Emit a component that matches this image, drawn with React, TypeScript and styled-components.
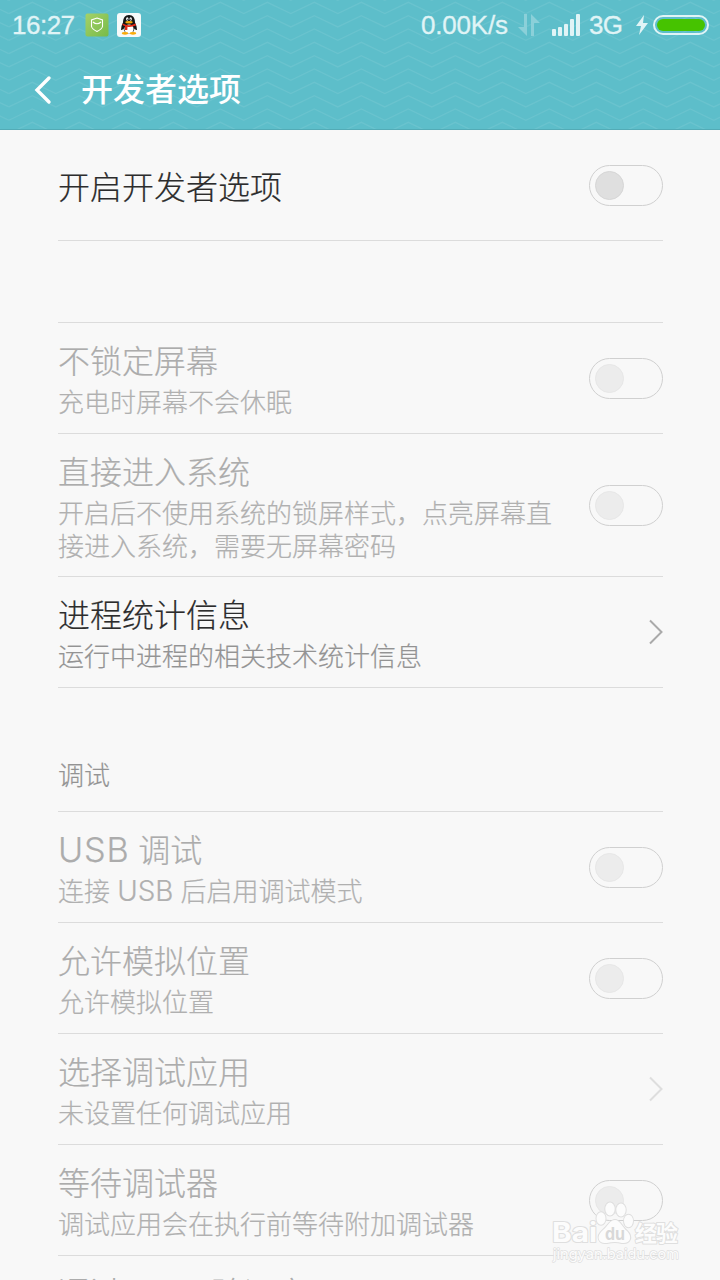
import React from 'react';
import styled, { createGlobalStyle } from 'styled-components';

const Global = createGlobalStyle`
  * { box-sizing: border-box; }
  html, body { margin: 0; height: 100%; overflow: hidden; background: #f8f8f8; }
`;

const sans = `'Liberation Sans', 'Noto Sans CJK SC', sans-serif`;

const Screen = styled.div`
  position: relative;
  width: 720px;
  height: 1280px;
  overflow: hidden;
  background: #f8f8f8;
  font-family: ${sans};
`;

const Header = styled.header`
  position: relative;
  height: 130px;
  background: #5dbeca;
  border-bottom: 1px solid #53abb6;
`;

const Waves = styled.svg`
  position: absolute;
  inset: 0;
`;

const StatusBar = styled.div`
  position: relative;
  display: flex;
  align-items: center;
  height: 50px;
  padding: 0 11px 0 12px;
  color: #e0f4f6;
  font-size: 26px;
  line-height: 50px;
`;

const StatusText = styled.span<{ $width: number; $spacing?: number }>`
  width: ${p => p.$width}px;
  white-space: nowrap;
  letter-spacing: ${p => p.$spacing ?? 0}px;
  -webkit-text-stroke: 0.3px currentColor;
`;

const StatusIcon = styled.svg<{ $gap: number }>`
  flex: none;
  margin-left: ${p => p.$gap}px;
`;

const Spacer = styled.div<{ $width?: number }>`
  flex: ${p => (p.$width ? `0 0 ${p.$width}px` : 1)};
`;

const TitleBar = styled.div`
  position: relative;
  display: flex;
  align-items: center;
  height: 80px;
  padding-left: 33px;
`;

const Title = styled.h1`
  margin: 0 0 0 28px;
  color: #fff;
  font-size: 32px;
  font-weight: 500;
  line-height: 48px;
`;

const List = styled.main`
  padding: 0 57px 0 58px;
`;

const Row = styled.div<{ $height: number }>`
  display: flex;
  justify-content: space-between;
  height: ${p => p.$height}px;
  border-bottom: 1px solid #dcdcdc;
`;

const Labels = styled.div<{ $top: number }>`
  width: 500px;
  padding-top: ${p => p.$top}px;
`;

const Label = styled.div<{ $active?: boolean }>`
  height: 44px;
  color: ${p => (p.$active ? '#2c2c2c' : '#acacac')};
  font-size: 32px;
  font-weight: 300;
  line-height: 44px;
  white-space: nowrap;
  -webkit-text-stroke: 0.2px currentColor;
`;

const Detail = styled.div<{ $active?: boolean }>`
  color: ${p => (p.$active ? '#939393' : '#b0b0b0')};
  font-size: 26px;
  font-weight: 300;
  line-height: 33px;
  margin-top: 3px;
  white-space: pre;
  -webkit-text-stroke: 0.2px currentColor;
`;

const Latin = styled.span`
  font-family: Inter, sans-serif;
  font-size: 1.07em;
  line-height: 1;

  ${Label} & {
    letter-spacing: 0.8px;
  }
`;

const Control = styled.div<{ $top: number }>`
  padding-top: ${p => p.$top}px;
`;

const Track = styled.div`
  width: 74px;
  height: 41px;
  padding: 5px;
  border: 1px solid #d0d0d0;
  border-radius: 21px;
`;

const Knob = styled.div<{ $active?: boolean }>`
  width: 29px;
  height: 29px;
  border: 1px solid ${p => (p.$active ? '#d6d6d6' : '#e7e7e7')};
  border-radius: 50%;
  background: ${p => (p.$active ? '#dfdfdf' : '#ececec')};
`;

const EmptySection = styled.div`
  height: 82px;
  border-bottom: 1px solid #dcdcdc;
`;

const Section = styled.div`
  height: 124px;
  padding-top: 71px;
  border-bottom: 1px solid #dcdcdc;
  color: #939393;
  font-size: 26px;
  font-weight: 300;
  line-height: 34px;
  -webkit-text-stroke: 0.2px currentColor;
`;

const Watermark = styled.svg`
  position: absolute;
  left: 545px;
  top: 1195px;
`;

type Item = {
  label: string;
  detail?: string;
  kind: 'switch' | 'link';
  height?: number;
  labelTop?: number;
  controlTop?: number;
  active?: boolean;
};

const general: Item[] = [
  { label: '不锁定屏幕', detail: '充电时屏幕不会休眠', kind: 'switch' },
  { label: '直接进入系统', detail: '开启后不使用系统的锁屏样式，点亮屏幕直\n接进入系统，需要无屏幕密码', kind: 'switch', height: 143, controlTop: 51 },
  { label: '进程统计信息', detail: '运行中进程的相关技术统计信息', kind: 'link', active: true },
];

const debugging: Item[] = [
  { label: 'USB 调试', detail: '连接 USB 后启用调试模式', kind: 'switch' },
  { label: '允许模拟位置', detail: '允许模拟位置', kind: 'switch' },
  { label: '选择调试应用', detail: '未设置任何调试应用', kind: 'link' },
  { label: '等待调试器', detail: '调试应用会在执行前等待附加调试器', kind: 'switch' },
  { label: '通过 USB 验证应用', kind: 'switch', labelTop: 16 },
];

const Mixed = ({ text }: { text: string }) => (
  <>{text.split(/([A-Z]+)/).map((part, i) => (i % 2 ? <Latin key={i}>{part}</Latin> : part))}</>
);

const Switch = ({ active }: { active?: boolean }) => (
  <Track><Knob $active={active} /></Track>
);

const Chevron = ({ active }: { active?: boolean }) => (
  <svg width="15" height="26" viewBox="0 0 15 26" fill="none" stroke={active ? '#aaa' : '#dedede'} strokeWidth="2">
    <path d="M2 1.5L13.5 13L2 24.5" />
  </svg>
);

const Option = ({ item }: { item: Item }) => (
  <Row $height={item.height ?? 111}>
    <Labels $top={item.labelTop ?? 17}>
      <Label $active={item.active}><Mixed text={item.label} /></Label>
      {item.detail && <Detail $active={item.active}><Mixed text={item.detail} /></Detail>}
    </Labels>
    <Control $top={item.controlTop ?? (item.kind === 'link' ? 42 : 35)}>
      {item.kind === 'link' ? <Chevron active={item.active} /> : <Switch />}
    </Control>
  </Row>
);

const zigzag = Array.from({ length: 33 }, (_, i) => `${i ? 'L' : 'M'}${-14.7 + i * 23.5} ${i % 2 ? 0 : 11.3}`).join('');
const waveRows = Array.from({ length: 11 }, (_, i) => -11 + i * 13.33);

const ZigZag = () => (
  <Waves width="720" height="129" fill="none" stroke="#6ac3ce" strokeWidth="1.3">
    {waveRows.map(y => <path key={y} d={zigzag} transform={`translate(23.5 ${y})`} />)}
    {waveRows.map(y => <path key={`start${y}`} d={`M-14.7 ${y}L8.8 ${y + 11.3}`} />)}
  </Waves>
);

const ShieldIcon = () => (
  <StatusIcon $gap={9} width="24" height="24" viewBox="0 0 24 24">
    <defs>
      <linearGradient id="leaf" x1="0" y1="0" x2="1" y2="1">
        <stop offset="0" stopColor="#a4d169" />
        <stop offset="1" stopColor="#78bb49" />
      </linearGradient>
    </defs>
    <rect x="0.5" y="0.5" width="23" height="23" rx="2" fill="url(#leaf)" />
    <path d="M12 5L17.5 7V13.5Q17 16 12 18.5Q7 16 6.5 13.5V7ZM8 9Q12 12.5 16 9" fill="none" stroke="#fff" strokeWidth="1.1" />
  </StatusIcon>
);

const PenguinIcon = () => (
  <StatusIcon $gap={8} width="24" height="24" viewBox="0 0 24 24">
    <rect width="24" height="24" rx="3" fill="#f7fafa" />
    <path d="M12 2C8 2 6 5 6 9.5Q4 13 4 17Q5 17.5 6.5 15.5Q7 20 12 20.5Q17 20 17.5 15.5Q19 17.5 20 17Q20 13 18 9.5C18 5 16 2 12 2Z" fill="#161616" />
    <ellipse cx="12" cy="16" rx="4.6" ry="4.6" fill="#fff" />
    <ellipse cx="10.3" cy="6" rx="1.2" ry="1.7" fill="#fff" />
    <ellipse cx="13.7" cy="6" rx="1.2" ry="1.7" fill="#fff" />
    <circle cx="10.6" cy="6.2" r="0.5" />
    <circle cx="13.4" cy="6.2" r="0.5" />
    <ellipse cx="12" cy="9.2" rx="3.7" ry="1.2" fill="#f8ab0a" />
    <path d="M5.5 10.5Q12 14 18.5 10.5L19 12.5Q14 14.5 10.5 13.8L10.3 17H8V13.3L5.5 12Z" fill="#e32918" />
    <ellipse cx="8" cy="20.3" rx="3.2" ry="1.4" fill="#f8ab0a" />
    <ellipse cx="16" cy="20.3" rx="3.2" ry="1.4" fill="#f8ab0a" />
  </StatusIcon>
);

const BaiduMark = () => (
  <Watermark width="140" height="70" viewBox="0 0 140 70" fontFamily="Inter,'Noto Sans CJK SC',sans-serif">
    <g fill="#fcfcfc" stroke="#dfdfdf" strokeWidth="2" paintOrder="stroke" strokeLinejoin="round">
      <text x="7" y="47" fontSize="27" fontWeight="700" textLength="45" lengthAdjust="spacingAndGlyphs">Bai</text>
      <ellipse cx="56" cy="23.5" rx="4.5" ry="6.2" />
      <ellipse cx="65" cy="14" rx="4.7" ry="6.5" />
      <ellipse cx="76" cy="15" rx="4.7" ry="6.5" />
      <ellipse cx="83.5" cy="26" rx="4.5" ry="6.2" />
      <path d="M70 25C65 25 63 31 58 35C50 42 54 49 62 48Q70 46 77 48C85 49 88 42 82 36C77 32 75 25 70 25Z" />
      <text x="90" y="46" fontSize="22" fontWeight="700" textLength="43">经验</text>
      <text x="8" y="63.5" fontSize="14.5" fontWeight="400" textLength="126" lengthAdjust="spacingAndGlyphs" strokeWidth="1.4">jingyan.baidu.com</text>
    </g>
    <text x="60" y="45" fontSize="17" fontWeight="700" fill="#d8d8d8" textLength="20" lengthAdjust="spacingAndGlyphs">du</text>
  </Watermark>
);

export default function App() {
  return (
    <Screen>
      <Global />
      <Header>
        <ZigZag />
        <StatusBar>
          <StatusText $width={64} $spacing={-0.5}>16:27</StatusText>
          <ShieldIcon />
          <PenguinIcon />
          <Spacer />
          <StatusText $width={87} $spacing={-0.2}>0.00K/s</StatusText>
          <StatusIcon $gap={10} width="22" height="22" viewBox="0 0 22 22" fill="#8bd0d9">
            <path d="M6 0H9V22L0 13H6ZM13 22H16V9H22L13 0Z" />
          </StatusIcon>
          <StatusIcon $gap={12} width="28" height="22" viewBox="0 0 28 22" fill="#e0f4f6">
            <rect x="0" y="15" width="4" height="7" rx="1" />
            <rect x="6" y="13" width="4" height="9" rx="1" />
            <rect x="12" y="10" width="4" height="12" rx="1" />
            <rect x="18" y="5" width="4" height="17" rx="1" />
            <rect x="24" y="0" width="4" height="22" rx="1" />
          </StatusIcon>
          <Spacer $width={9} />
          <StatusText $width={33} $spacing={-0.8}>3G</StatusText>
          <StatusIcon $gap={14} width="12" height="20" viewBox="0 0 12 20" fill="#e0f4f6">
            <path d="M8 0L0 11H5L3 20L12 8H7Z" />
          </StatusIcon>
          <StatusIcon $gap={5} width="56" height="20" viewBox="0 0 56 20">
            <rect x="1" y="1" width="54" height="18" rx="9" fill="none" stroke="#e0f4f6" strokeWidth="2" />
            <rect x="4" y="4" width="48" height="12" rx="6" fill="#46c300" />
          </StatusIcon>
        </StatusBar>
        <TitleBar>
          <svg width="20" height="30" viewBox="0 0 20 30" fill="none" stroke="#fff" strokeWidth="3.4" strokeLinecap="round">
            <path d="M16 3L4 15L16 27" />
          </svg>
          <Title>开发者选项</Title>
        </TitleBar>
      </Header>
      <List>
        <Row $height={111}>
          <Labels $top={36}><Label $active>开启开发者选项</Label></Labels>
          <Control $top={35}><Switch active /></Control>
        </Row>
        <EmptySection />
        {general.map(item => <Option key={item.label} item={item} />)}
        <Section>调试</Section>
        {debugging.map(item => <Option key={item.label} item={item} />)}
      </List>
      <BaiduMark />
    </Screen>
  );
}
